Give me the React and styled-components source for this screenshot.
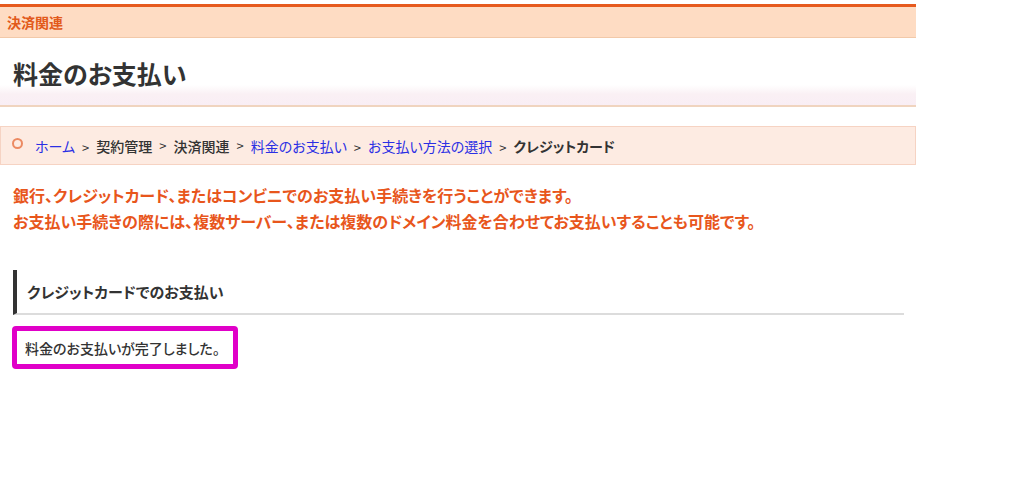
import React from "react";
import styled, { createGlobalStyle } from "styled-components";

const GlobalStyle = createGlobalStyle`
  body {
    margin: 0;
    background: #fff;
    font-family: "Noto Sans CJK JP", "Noto Sans", sans-serif;
    font-feature-settings: "palt";
    color: #333;
  }
`;

const Page = styled.div`
  width: 916px;
  padding-top: 4px;
`;

const CategoryBar = styled.div`
  height: 30px;
  border-top: 3px solid #e65a1e;
  border-bottom: 1px solid #f2c9a9;
  background: #fedcc3;
  padding-left: 7px;
  display: flex;
  align-items: center;
  font-size: 14px;
  font-weight: 700;
  color: #e25a1b;
`;

const TitleBlock = styled.div`
  height: 67px;
  border-bottom: 2px solid #f0d4bf;
  background: linear-gradient(
    to bottom,
    #fff 0,
    #fff 70%,
    #faf0f4 84%,
    #f9eef5 100%
  );
`;

const Title = styled.h1`
  margin: 0;
  padding: 20px 0 0 13px;
  font-size: 25px;
  line-height: 30px;
  font-weight: 700;
  color: #333;
`;

const Breadcrumb = styled.nav`
  margin-top: 19px;
  height: 37px;
  border: 1px solid #f6d3c3;
  background: #fdebe2;
  display: flex;
  align-items: center;
  padding-left: 11px;
  font-size: 14px;
  line-height: 1;
`;

const Ring = styled.span`
  width: 7px;
  height: 7px;
  border: 2px solid #ec8a62;
  border-radius: 50%;
  margin-right: 12px;
  margin-top: -4px;
`;

const Crumb = styled.a`
  color: ${(p) => (p.$link ? "#2b2fe4" : "#333")};
  font-weight: ${(p) => (p.$current ? 700 : p.$link ? 400 : 500)};
  text-decoration: none;
`;

const Sep = styled.span`
  color: #333;
  margin: 0 7px;
  font-size: 13px;
  position: relative;
  top: ${(p) => (p.$low ? "2px" : "0")};
`;

const Lead = styled.p`
  margin: 17px 0 0;
  padding-left: 13px;
  font-size: 16px;
  line-height: 26px;
  font-weight: 700;
  color: #e8561c;
`;

const SectionHeading = styled.h2`
  margin: 36px 12px 0 13px;
  height: 45px;
  box-sizing: border-box;
  border-left: 4px solid #333;
  border-bottom: 2px solid #dcdcdc;
  padding-left: 10px;
  display: flex;
  align-items: center;
  font-size: 15px;
  font-weight: 700;
  color: #333;
`;

const Notice = styled.div`
  margin: 11px 0 0 12px;
  width: 226px;
  height: 43px;
  box-sizing: border-box;
  border: 5px solid #e000c8;
  border-radius: 4px;
  padding-left: 8px;
  display: flex;
  align-items: center;
  font-size: 14px;
  font-weight: 500;
  color: #333;
`;

const crumbs = [
  { label: "ホーム", link: true },
  { label: "契約管理" },
  { label: "決済関連" },
  { label: "料金のお支払い", link: true },
  { label: "お支払い方法の選択", link: true },
  { label: "クレジットカード", current: true },
];

export default function App() {
  return (
    <>
      <GlobalStyle />
      <Page>
        <CategoryBar>決済関連</CategoryBar>
        <TitleBlock>
          <Title>料金のお支払い</Title>
        </TitleBlock>
        <Breadcrumb>
          <Ring />
          {crumbs.map((c, i) => (
            <React.Fragment key={c.label}>
              <Crumb href={c.link ? "#" : undefined} $link={c.link} $current={c.current}>
                {c.label}
              </Crumb>
              {i < crumbs.length - 1 && <Sep $low={c.link}>&gt;</Sep>}
            </React.Fragment>
          ))}
        </Breadcrumb>
        <Lead>
          銀行、クレジットカード、またはコンビニでのお支払い手続きを行うことができます。
          <br />
          お支払い手続きの際には、複数サーバー、または複数のドメイン料金を合わせてお支払いすることも可能です。
        </Lead>
        <SectionHeading>クレジットカードでのお支払い</SectionHeading>
        <Notice>料金のお支払いが完了しました。</Notice>
      </Page>
    </>
  );
}
